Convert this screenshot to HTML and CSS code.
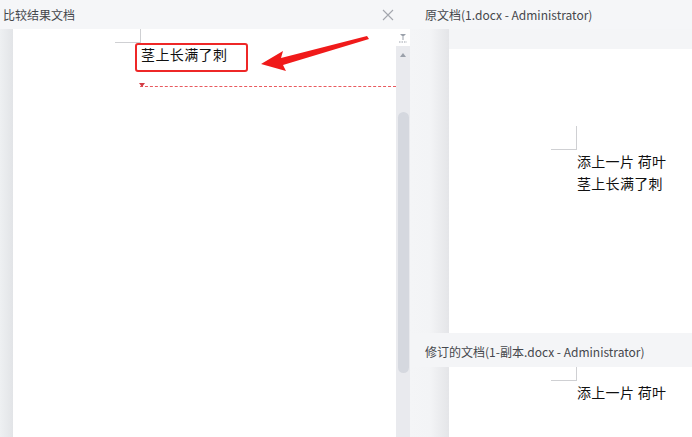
FILE: index.html
```html
<!DOCTYPE html>
<html lang="zh-CN">
<head>
    <meta charset="UTF-8">
    <title>比较结果文档</title>
    <link rel="stylesheet" href="styles.css">
</head>
<body>
    <div class="left-pane">
        <div class="pane-header">
            <span class="pane-title">比较结果文档</span>
            <svg class="close-icon" width="12" height="12" viewBox="0 0 12 12">
                <path d="M1 1 L11 11 M11 1 L1 11" stroke="#a3a7ae" stroke-width="1.1" fill="none"/>
            </svg>
        </div>
        <div class="pane-body">
            <div class="side-strip"></div>
            <div class="doc-area">
                <div class="corner corner-short"></div>
                <div class="change-box">茎上长满了刺</div>
                <div class="change-line">
                    <span class="change-mark"></span>
                </div>
                <!-- annotation arrow -->
                <svg class="arrow" width="120" height="40" viewBox="0 0 120 40">
                    <path d="M2 30 L24 17 L22 24 L108 2 L110 5 L24 31 L27 37 Z" fill="#f01a1a"/>
                </svg>
            </div>
            <div class="scrollbar">
                <div class="scroll-top">
                    <svg width="8" height="10" viewBox="0 0 8 10">
                        <path d="M1 1 H7 L4 4 Z" fill="#9ba1ab"/>
                        <path d="M4 4 V7" stroke="#9ba1ab" stroke-width="1"/>
                        <path d="M0 9 H8" stroke="#9ba1ab" stroke-width="1" stroke-dasharray="1.5 1"/>
                    </svg>
                </div>
                <div class="scroll-track">
                    <div class="scroll-up"></div>
                    <div class="scroll-thumb"></div>
                </div>
            </div>
        </div>
    </div>

    <div class="right-pane">
        <div class="pane-header">
            <span class="pane-title right-title">原文档(1.docx - Administrator)</span>
        </div>
        <div class="view view-top">
            <div class="page page-top">
                <div class="corner corner-tall"></div>
                <div class="page-text">添上一片 荷叶<br>茎上长满了刺</div>
            </div>
        </div>
        <div class="pane-header sub-header">
            <span class="pane-title right-title">修订的文档(1-副本.docx - Administrator)</span>
        </div>
        <div class="view view-bottom">
            <div class="page">
                <div class="corner corner-short"></div>
                <div class="page-text">添上一片 荷叶</div>
            </div>
        </div>
    </div>
</body>
</html>
```

FILE: styles.css
```css
* {
    margin: 0;
    padding: 0;
    box-sizing: border-box;
}

body {
    display: flex;
    width: 692px;
    height: 437px;
    overflow: hidden;
    background-color: #f5f6f8;
    font-family: "Noto Sans CJK SC", "Noto Sans", sans-serif;
    color: #333;
}

.left-pane {
    width: 410px;
    display: flex;
    flex-direction: column;
}

.pane-header {
    height: 29px;
    display: flex;
    align-items: center;
    justify-content: space-between;
    background-color: #f5f6f8;
}

.pane-title {
    font-size: 12px;
    color: #45474c;
    padding-left: 3px;
}

.close-icon {
    margin-right: 16px;
}

.pane-body {
    flex: 1;
    display: flex;
}

.side-strip {
    width: 13px;
    background: linear-gradient(to right, #eef0f2, #e2e4e7);
}

.doc-area {
    width: 383px;
    background-color: #fff;
    position: relative;
}

.corner {
    border-right: 1px solid #cfd0d3;
    border-bottom: 1px solid #cfd0d3;
}

.corner-short {
    width: 26px;
    height: 14px;
    margin-left: 102px;
}

.change-box {
    width: 113px;
    height: 29px;
    margin-left: 122px;
    border: 2px solid #ee2727;
    border-radius: 3px;
    padding-left: 4px;
    font-size: 14px;
    line-height: 19px;
    letter-spacing: 0.4px;
    color: #111;
}

.change-line {
    margin-top: 14px;
    margin-left: 127px;
    border-top: 1px dashed #e85a5f;
    position: relative;
}

.change-mark {
    position: absolute;
    left: -1px;
    top: -4px;
    border-left: 3px solid transparent;
    border-right: 3px solid transparent;
    border-top: 4px solid #d23b44;
}

.arrow {
    position: absolute;
    left: 246px;
    top: 5px;
}

.scrollbar {
    width: 14px;
    display: flex;
    flex-direction: column;
    background-color: #f5f6f8;
}

.scroll-top {
    height: 17px;
    display: flex;
    justify-content: center;
    align-items: center;
    background-color: #fff;
}

.scroll-track {
    flex: 1;
    background-color: #e9eaee;
    padding: 0 1px;
    display: flex;
    flex-direction: column;
    align-items: center;
}

.scroll-up {
    margin-top: 7px;
    border-left: 3px solid transparent;
    border-right: 3px solid transparent;
    border-bottom: 4px solid #9aa0aa;
}

.scroll-thumb {
    margin-top: 55px;
    width: 11px;
    height: 261px;
    border-radius: 6px;
    background-color: #d5d8df;
}

.right-pane {
    flex: 1;
    display: flex;
    flex-direction: column;
}

.right-title {
    padding-left: 15px;
}

.sub-header {
    height: 34px;
    background-color: #f4f5f7;
    padding-top: 2px;
}

.view {
    padding-left: 39px;
    background: linear-gradient(to right, #f4f5f7 0, #f3f4f6 20px, #e4e5e8 39px, #f4f5f7 39px);
}

.view-top {
    height: 304px;
    padding-top: 20px;
}

.view-bottom {
    flex: 1;
}

.page {
    height: 100%;
    background-color: #fff;
}

.page-top {
    padding-top: 77px;
}

.corner-tall {
    width: 26px;
    height: 24px;
    margin-left: 102px;
}

.page-text {
    margin-left: 128px;
    font-size: 14px;
    line-height: 22px;
    letter-spacing: 0.3px;
    color: #111;
}
```
